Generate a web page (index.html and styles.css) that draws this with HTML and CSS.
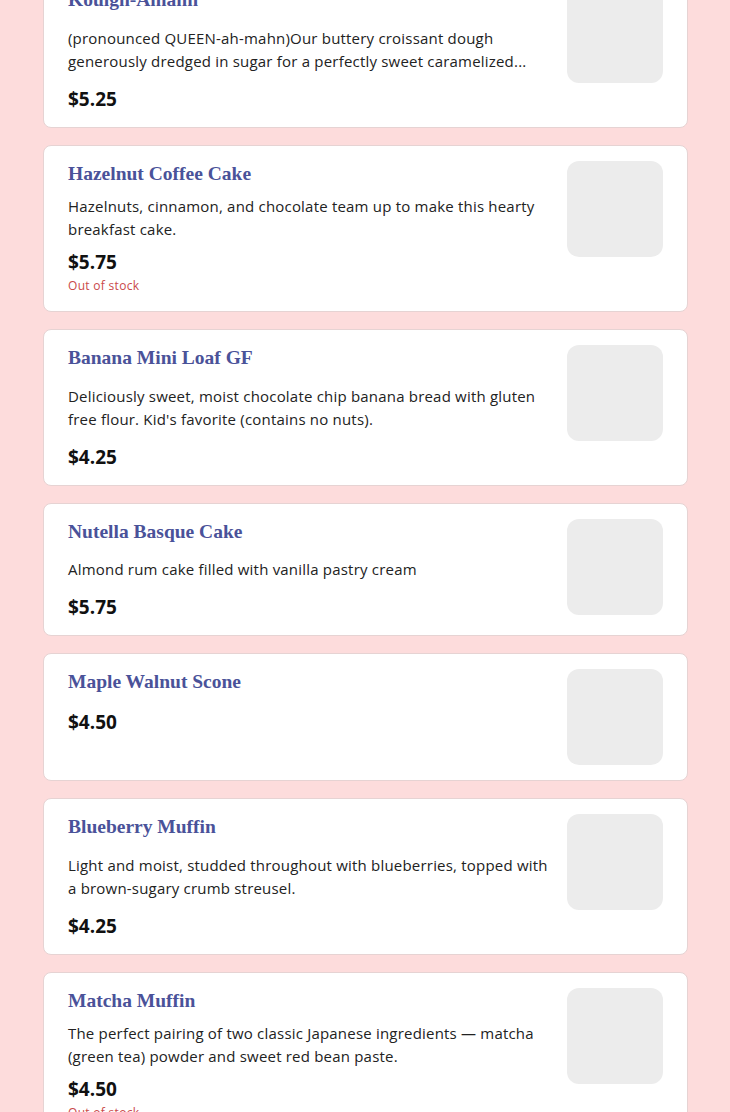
FILE: index.html
```html
<!DOCTYPE html>
<html lang="en">
<head>
    <meta charset="UTF-8">
    <meta name="viewport" content="width=device-width, initial-scale=1.0">
    <title>Pastries</title>
    <link rel="stylesheet" href="styles.css">
</head>
<body>
    <div class="menu">
        <div class="item">
            <div class="info">
                <h2>Kouign-Amann</h2>
                <p class="desc">(pronounced QUEEN-ah-mahn)Our buttery croissant dough generously dredged in sugar for a perfectly sweet caramelized...</p>
                <div class="price">$5.25</div>
            </div>
            <div class="photo"></div>
        </div>

        <div class="item sold-out">
            <div class="info">
                <h2>Hazelnut Coffee Cake</h2>
                <p class="desc">Hazelnuts, cinnamon, and chocolate team up to make this hearty breakfast cake.</p>
                <div class="price">$5.75</div>
                <div class="stock">Out of stock</div>
            </div>
            <div class="photo"></div>
        </div>

        <div class="item">
            <div class="info">
                <h2>Banana Mini Loaf GF</h2>
                <p class="desc">Deliciously sweet, moist chocolate chip banana bread with gluten free flour. Kid's favorite (contains no nuts).</p>
                <div class="price">$4.25</div>
            </div>
            <div class="photo"></div>
        </div>

        <div class="item">
            <div class="info">
                <h2>Nutella Basque Cake</h2>
                <p class="desc">Almond rum cake filled with vanilla pastry cream</p>
                <div class="price">$5.75</div>
            </div>
            <div class="photo"></div>
        </div>

        <div class="item">
            <div class="info">
                <h2>Maple Walnut Scone</h2>
                <div class="price">$4.50</div>
            </div>
            <div class="photo"></div>
        </div>

        <div class="item">
            <div class="info">
                <h2>Blueberry Muffin</h2>
                <p class="desc">Light and moist, studded throughout with blueberries, topped with a brown-sugary crumb streusel.</p>
                <div class="price">$4.25</div>
            </div>
            <div class="photo"></div>
        </div>

        <div class="item sold-out">
            <div class="info">
                <h2>Matcha Muffin</h2>
                <p class="desc">The perfect pairing of two classic Japanese ingredients — matcha (green tea) powder and sweet red bean paste.</p>
                <div class="price">$4.50</div>
                <div class="stock">Out of stock</div>
            </div>
            <div class="photo"></div>
        </div>
    </div>
</body>
</html>
```

FILE: styles.css
```css
body {
    background-color: #fddcdc;
    font-family: 'Open Sans', sans-serif;
    margin: 0;
    padding: 0;
    overflow: hidden;
}

.menu {
    display: flex;
    flex-direction: column;
    gap: 17px;
    margin: -29px 42px 0 43px;
}

.item {
    display: flex;
    gap: 16px;
    background-color: #fff;
    border: 1px solid #e6d3d3;
    border-radius: 8px;
    padding: 15px 24px;
}

.info {
    flex: 1;
    display: flex;
    flex-direction: column;
    gap: 13px;
}

.sold-out .info {
    gap: 8px;
}

h2 {
    margin: 0;
    font-family: 'Liberation Serif', serif;
    font-size: 19.5px;
    font-weight: bold;
    line-height: 26.5px;
    color: #4a5299;
}

.desc {
    margin: 0;
    font-size: 15px;
    line-height: 23px;
    letter-spacing: 0.2px;
    color: #222;
}

.price {
    font-size: 19px;
    font-weight: bold;
    line-height: 26px;
    color: #111;
}

.stock {
    margin-top: -8px;
    font-size: 12px;
    line-height: 21px;
    letter-spacing: 0.3px;
    color: #c94a4a;
}

.photo {
    width: 96px;
    height: 96px;
    flex-shrink: 0;
    background-color: #ececec;
    border-radius: 12px;
}
```
